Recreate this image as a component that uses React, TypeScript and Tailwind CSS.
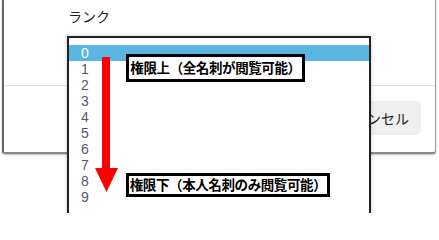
import React from "react";

export default function App() {
  const ranks = ["0", "1", "2", "3", "4", "5", "6", "7", "8", "9"];
  return (
    <div
      className="relative w-[439px] h-[213px] bg-white overflow-hidden"
      style={{ fontFamily: '"Noto Sans CJK JP", "Liberation Sans", sans-serif' }}
    >
      {/* modal window */}
      <div className="ml-[2px] w-[434px] h-[154px] flex flex-col bg-white border-l-2 border-r border-b-2 border-l-[#5f6670] border-r-[#9a9a9a] border-b-[#8a8a8a] rounded-b-[3px] shadow-[0_1px_2px_rgba(0,0,0,0.25)]">
        <div className="h-[85px] pl-[64px] pt-[6px] text-[14px] leading-[20px] text-[#222]">ランク</div>
        <div className="flex-1 border-t border-[#e3e3e3] flex justify-end items-start pt-[15px] pr-[14px]">
          <div className="h-[34px] px-[12px] rounded-[5px] bg-[#efefef] flex items-center text-[14px] text-[#222]">
            キャンセル
          </div>
        </div>
      </div>

      {/* open dropdown list */}
      <div className="absolute left-[67px] top-[36px] w-[304px] h-[190px] bg-white border-2 border-[#222] shadow-[0_0_4px_rgba(0,0,0,0.2)] pt-[7px]">
        {ranks.map((r, i) => (
          <div
            key={r}
            className={
              i === 0
                ? "h-[16px] pl-[12px] flex items-center text-[14px] bg-[#5bb5e2] text-white"
                : "h-[16px] pl-[12px] flex items-center text-[14px] text-[#505a6a]"
            }
            style={{ fontFamily: '"Liberation Sans", Arial, sans-serif' }}
          >
            {r}
          </div>
        ))}
      </div>

      {/* red arrow annotation */}
      <svg className="absolute left-[94px] top-[56px]" width="26" height="138" viewBox="0 0 26 138">
        <rect x="8" y="1" width="8" height="112" fill="#ff0000" />
        <polygon points="1,112 24,112 12.5,136" fill="#ff0000" />
      </svg>

      {/* labels */}
      <div className="absolute left-[126px] top-[54px] w-[179px] h-[28px] border-[3px] border-black bg-white flex items-center justify-center text-[13.5px] font-bold text-black leading-none whitespace-nowrap tracking-[-0.4px]">
        権限上（全名刺が閲覧可能）
      </div>
      <div className="absolute left-[126px] top-[173px] w-[204px] h-[24px] border-[3px] border-black bg-white flex items-center justify-center text-[13.5px] font-bold text-black leading-none whitespace-nowrap tracking-[-0.4px]">
        権限下（本人名刺のみ閲覧可能）
      </div>
    </div>
  );
}
